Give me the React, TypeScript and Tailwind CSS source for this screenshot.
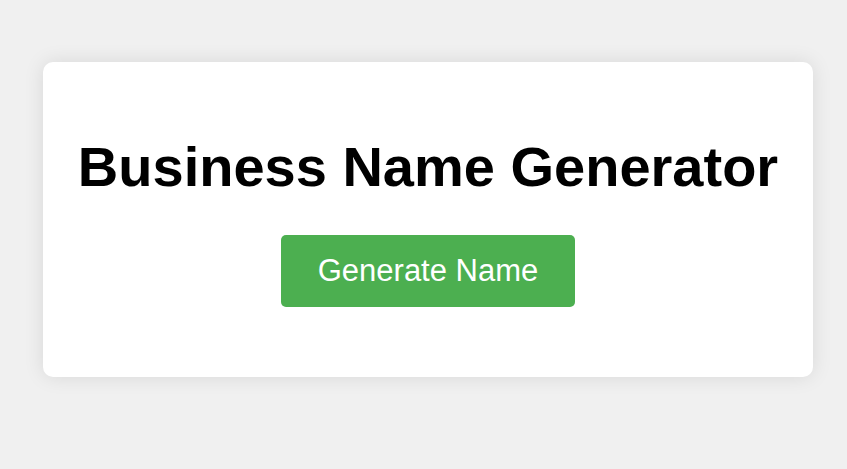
const App = () => {
  return (
    <div className="min-h-screen bg-[#f0f0f0] pt-[62px] pl-[43px] font-['Liberation_Sans',Arial,sans-serif]">
      <div className="w-[770px] rounded-[10px] bg-white shadow-[0_0_20px_rgba(0,0,0,0.1)] pt-[73px] pb-[70px] flex flex-col items-center">
        <h1 className="text-[56px] leading-[64px] font-bold text-black">Business Name Generator</h1>
        <button className="mt-[36px] rounded-[5px] bg-[#4caf50] px-[37px] py-[19px] text-[31px] leading-[34px] text-white">
          Generate Name
        </button>
      </div>
    </div>
  )
}

export default App
